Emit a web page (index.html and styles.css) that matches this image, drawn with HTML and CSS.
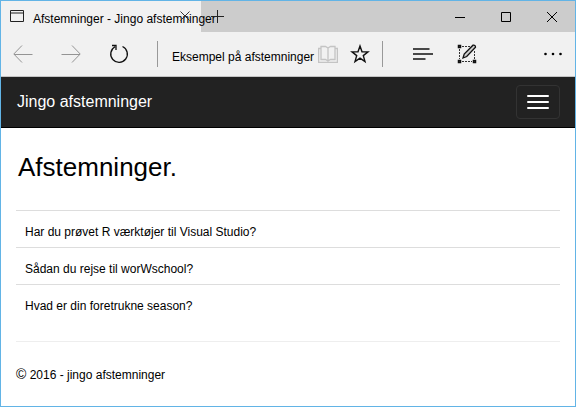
FILE: index.html
```html
<!DOCTYPE html>
<html lang="da">
<head>
<meta charset="utf-8">
<title>Afstemninger - Jingo afstemninger</title>
<link rel="stylesheet" href="styles.css">
</head>
<body>
<div class="window">
  <header class="titlebar">
    <div class="tab">
      <svg class="page-icon" width="14" height="12" viewBox="0 0 14 12" aria-hidden="true"><path d="M.5.5h13v11H.5z" fill="none" stroke="#222"/><path d="M1 2h12v2H1z" fill="#888"/></svg>
      <span class="tab-title">Afstemninger - Jingo afstemninger</span>
      <button class="tab-close" aria-label="Luk fane"><svg width="10" height="10" viewBox="0 0 10 10"><path d="M.5.5l9 9M9.500.5l-9 9" stroke="#333" fill="none"/></svg></button>
    </div>
    <button class="new-tab" aria-label="Ny fane"><svg width="13" height="13" viewBox="0 0 13 13"><path d="M6.500 0v13M0 6.500h13" stroke="#222" fill="none"/></svg></button>
    <div class="window-buttons">
      <button aria-label="Minimer"><svg width="10" height="10" viewBox="0 0 10 10"><path d="M0 5.500h10" stroke="#000"/></svg></button>
      <button aria-label="Maksimer"><svg width="10" height="10" viewBox="0 0 10 10"><path d="M.5.5h9v9h-9z" stroke="#000" fill="none"/></svg></button>
      <button aria-label="Luk"><svg width="10" height="10" viewBox="0 0 10 10"><path d="M0 0l10 10M10 0L0 10" stroke="#000"/></svg></button>
    </div>
  </header>
  <div class="toolbar">
    <div class="history">
      <button aria-label="Tilbage"><svg width="20" height="18" viewBox="0 0 20 18"><path d="M9 .5L.8 9 9 17.500M1 9.500h18.500" stroke="#949494" fill="none"/></svg></button>
      <button aria-label="Frem"><svg width="20" height="18" viewBox="0 0 20 18"><path d="M11 .5L19.200 9 11 17.500M19 9.500H.5" stroke="#949494" fill="none"/></svg></button>
      <button aria-label="Opdater"><svg width="20" height="20" viewBox="0 0 20 20"><path d="M13.500 2.500a8.300 8.300 0 1 1-7.500.3M3 1.500h4v4.500" stroke="#111" stroke-width="1.300" fill="none"/></svg></button>
    </div>
    <div class="address">
      <input type="text" aria-label="Adresse" value="Eksempel på afstemninger">
      <button aria-label="Læsevisning"><svg width="20" height="18" viewBox="0 0 20 18"><path d="M3 1.500h4.500L10 3l2.500-1.500H17v13h-4.500L10 16l-2.500-1.500H3zM10 3v13M3 3.500H.6v13.800h18.800V3.500H17" stroke="#c4c4c4" stroke-width="1.300" fill="none"/></svg></button>
      <button aria-label="Føj til favoritter"><svg width="20" height="20" viewBox="0 0 20 20"><path d="M10 2l2 5.700 6 .2-4.700 3.700 1.700 6-5-3.400-5 3.400 1.700-6L2 7.900l6-.2z" stroke="#111" stroke-width="1.400" fill="none"/></svg></button>
    </div>
    <div class="tools">
      <button aria-label="Hub"><svg width="20" height="12" viewBox="0 0 20 12"><path d="M0 1h16.500M0 6h20M0 11h12.500" stroke="#111" stroke-width="1.300"/></svg></button>
      <button aria-label="Lav en webnote"><svg width="20" height="20" viewBox="0 0 20 20"><path d="M5 2.500h8M2.500 5v10M5 17.500h10M17.500 7v8" stroke="#333" stroke-dasharray="2 1" fill="none"/><path d="M1.500 1.500h2v2h-2zM1.500 16.500h2v2h-2zM16.500 16.500h2v2h-2z" fill="#666" stroke="#111" stroke-width="1.500"/><path d="M6 14l1.200-4L16 1.200q2.500-.6 2.500 2L9.700 12.500z" fill="#ccc" stroke="#111" stroke-width="1.300"/></svg></button>
      <button class="more" aria-label="Flere"><svg width="18" height="4" viewBox="0 0 18 4"><circle cx="1.500" cy="2" r="1.300"/><circle cx="9" cy="2" r="1.300"/><circle cx="16.500" cy="2" r="1.300"/></svg></button>
    </div>
  </div>
  <nav class="navbar">
    <a class="brand" href="#">Jingo afstemninger</a>
    <button class="toggle" aria-label="Vis menu"><span></span><span></span><span></span></button>
  </nav>
  <main class="content">
    <h1>Afstemninger.</h1>
    <table>
      <tbody>
        <tr><td>Har du prøvet R værktøjer til Visual Studio?</td></tr>
        <tr><td>Sådan du rejse til worWschool?</td></tr>
        <tr><td>Hvad er din foretrukne season?</td></tr>
      </tbody>
    </table>
    <footer><span class="copy">©</span> 2016 - jingo afstemninger</footer>
  </main>
</div>
</body>
</html>
```
FILE: styles.css
```css
* { box-sizing: border-box; }

body {
  margin: 0;
  font: 12px/20px "Liberation Sans", Arial, sans-serif;
  color: #000;
  background: #fff;
}

button {
  display: flex;
  align-items: center;
  justify-content: center;
  padding: 0;
  border: 0;
  background: none;
}

svg { display: block; flex: none; }

.window {
  min-height: 100vh;
  border: 1px solid #62b4e6;
}

.titlebar {
  display: flex;
  height: 31px;
  background: #ccc;
}

.tab {
  display: flex;
  align-items: center;
  width: 200px;
  padding: 0 11px 2px 9px;
  background: #f1f1f1;
}

.page-icon { margin-right: 9px; }

.tab-title {
  flex: 1;
  min-width: 0;
  padding-top: 6px;
  white-space: nowrap;
}

.new-tab { width: 33px; }

.window-buttons {
  display: flex;
  margin-left: auto;
}

.window-buttons button { width: 46px; }

.toolbar {
  display: flex;
  align-items: center;
  height: 45px;
  border-bottom: 1px solid #c4c4c4;
  background: #f1f1f1;
}

.history {
  display: flex;
  align-items: center;
  gap: 28px;
  padding: 0 28px 0 12px;
}

.address {
  display: flex;
  align-items: center;
  flex: 0 1 226px;
  min-width: 0;
  height: 26px;
  padding: 0 12px 0 14px;
  border: solid #999;
  border-width: 0 1px;
}

.address input {
  flex: 1;
  min-width: 0;
  height: 26px;
  padding: 6px 0 0;
  border: 0;
  background: none;
  font: inherit;
  color: inherit;
}

.address button + button { margin-left: 12px; }

.tools {
  display: flex;
  align-items: center;
  flex: 1;
  gap: 24px;
  padding: 0 13px 0 30px;
}

.more { margin-left: auto; }

.navbar {
  display: flex;
  align-items: center;
  justify-content: space-between;
  height: 51px;
  padding: 0 15px 0 16px;
  border-bottom: 1px solid #000;
  background: #222;
}

.brand {
  font-size: 16px;
  color: #fff;
  text-decoration: none;
}

.toggle {
  flex-direction: column;
  gap: 4px;
  width: 44px;
  height: 34px;
  border: 1px solid #333;
  border-radius: 4px;
}

.toggle span {
  width: 22px;
  height: 2px;
  border-radius: 1px;
  background: #fff;
}

.content { padding: 24px 15px 16px; }

h1 {
  margin: 0 2px 28px;
  font-size: 26px;
  line-height: 30px;
  font-weight: 400;
}

table {
  width: 100%;
  border-collapse: collapse;
}

td {
  height: 37px;
  padding: 6px 9px 0;
  border-top: 1px solid #ddd;
}

footer {
  margin-top: 19px;
  padding-top: 22px;
  border-top: 1px solid #eee;
}

.copy { font-size: 14px; }
```
